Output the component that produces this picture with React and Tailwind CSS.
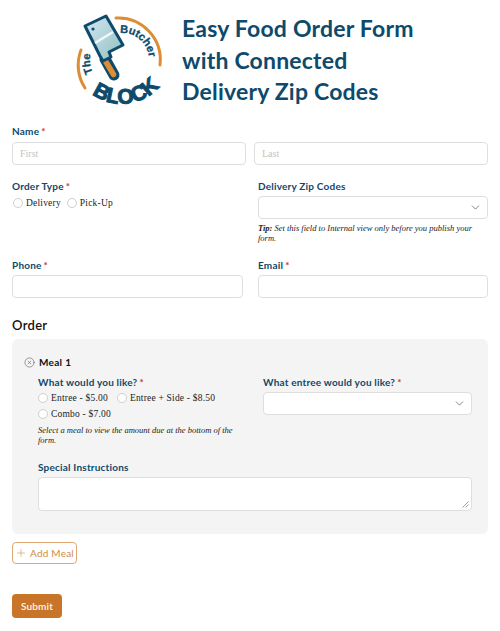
import React from 'react';
import { ChevronDown, Plus, CircleX } from 'lucide-react';

const labelFont = "font-['Lato',sans-serif]";
const bodyFont = "font-['Liberation_Serif',serif]";

function Logo() {
  return (
    <svg width="110" height="115" viewBox="0 0 110 115" className="shrink-0">
      <defs>
        <linearGradient id="blade" x1="0" y1="0" x2="1" y2="1">
          <stop offset="0" stopColor="#d5e6f2" />
          <stop offset="1" stopColor="#8fc0c0" />
        </linearGradient>
        <path id="butcherArc" d="M 60 33 A 27 27 0 0 1 89 62" fill="none" />
        <path id="theArc" d="M 33 73 A 30 30 0 0 1 33 47" fill="none" />
        <path id="blockArc" d="M 32 94 A 50 50 0 0 0 105 79" fill="none" />
      </defs>
      <path d="M 25 88 A 42 42 0 0 1 21 50" fill="none" stroke="#dd8d33" strokeWidth="3" strokeLinecap="round" />
      <path d="M 56 18 A 42 42 0 0 1 100 65" fill="none" stroke="#dd8d33" strokeWidth="3" strokeLinecap="round" />
      <path d="M 45 59 L 54 75" stroke="#0d4a6b" strokeWidth="11" strokeLinecap="round" />
      <path d="M 46 62 L 53.5 74.5" stroke="#dd8d33" strokeWidth="5.5" strokeLinecap="round" />
      <path d="M 25 26 L 46 16 L 63 45 L 49 52 L 51 57 L 43 61 L 40 56 Z" fill="url(#blade)" stroke="#0d4a6b" strokeWidth="3" strokeLinejoin="round" />
      <path d="M 35 43 L 53 32" stroke="#f1f7f8" strokeWidth="2.5" />
      <circle cx="33" cy="29" r="1.6" fill="#0d4a6b" />
      <text className="font-['Liberation_Sans',sans-serif]" fontWeight="700" fontSize="11" fill="#0d4a6b" stroke="#0d4a6b" strokeWidth="0.3">
        <textPath href="#butcherArc">Butcher</textPath>
      </text>
      <text className="font-['Liberation_Sans',sans-serif]" fontWeight="700" fontSize="11" fill="#0d4a6b" stroke="#0d4a6b" strokeWidth="0.3">
        <textPath href="#theArc">The</textPath>
      </text>
      <text className="font-['Liberation_Sans',sans-serif]" fontWeight="700" fontSize="21" fill="#0d4a6b" stroke="#0d4a6b" strokeWidth="1">
        <textPath href="#blockArc">BLOCK</textPath>
      </text>
    </svg>
  );
}

function Label({ children, required, className = '' }) {
  return (
    <div className={`${labelFont} text-[10px] leading-[14px] font-bold tracking-[0.2px] text-[#10486a] ${className}`}>
      {children}
      {required && <span className="text-[#d2322d] ml-0.5">*</span>}
    </div>
  );
}

function TextBox({ placeholder, className = '' }) {
  return (
    <div className={`h-[23px] bg-white border border-[#dedede] rounded-[4px] pl-[7px] flex items-center ${bodyFont} text-[10px] text-[#c4c4c4] ${className}`}>
      {placeholder}
    </div>
  );
}

function SelectBox() {
  return (
    <div className="h-[23px] bg-white border border-[#dedede] rounded-[4px] flex items-center justify-end pr-[5px]">
      <ChevronDown size={13} strokeWidth={1.1} className="text-[#333]" />
    </div>
  );
}

function Radio({ children }) {
  return (
    <div className={`flex items-center gap-[3px] ${bodyFont} text-[9.5px] leading-[14px] text-[#222] tracking-[0.2px]`}>
      <span className="w-[10px] h-[10px] rounded-full bg-white border border-[#cfcfcf]" />
      {children}
    </div>
  );
}

export default function App() {
  return (
    <div className="w-[500px] h-[631px] bg-white overflow-hidden">
      <div className="flex pl-[60px] h-[124px]">
        <Logo />
        <h1 className="ml-3 pt-[13px] font-['Lato',sans-serif] font-bold text-[23px] leading-[31.5px] tracking-[0.2px] text-[#0d4a6b]">
          Easy Food Order Form<br />with Connected<br />Delivery Zip Codes
        </h1>
      </div>

      <div className="px-3">
        <Label required>Name</Label>
        <div className="flex gap-2 mt-1">
          <TextBox placeholder="First" className="flex-1" />
          <TextBox placeholder="Last" className="flex-1" />
        </div>

        <div className="flex gap-[15px] mt-[14px]">
          <div className="w-[231px]">
            <Label required>Order Type</Label>
            <div className="flex gap-[6px] mt-[3px] pl-px">
              <Radio>Delivery</Radio>
              <Radio>Pick-Up</Radio>
            </div>
          </div>
          <div className="flex-1">
            <Label>Delivery Zip Codes</Label>
            <div className="mt-[3px]"><SelectBox /></div>
            <p className={`${bodyFont} italic text-[8.5px] leading-[10px] text-[#222] mt-[4px]`}>
              <b>Tip:</b> Set this field to Internal view only before you publish your form.
            </p>
          </div>
        </div>

        <div className="flex gap-[15px] mt-[15px]">
          <div className="w-[231px]">
            <Label required>Phone</Label>
            <TextBox className="mt-[3px]" />
          </div>
          <div className="flex-1">
            <Label required>Email</Label>
            <TextBox className="mt-[3px]" />
          </div>
        </div>

        <h2 className={`${labelFont} font-semibold text-[13px] leading-[18px] tracking-[0.3px] text-[#111] mt-[18px]`}>Order</h2>

        <div className="bg-[#f4f4f4] rounded-[6px] mt-[5px] h-[195px] pl-3 pr-4 pt-[16px]">
          <div className={`flex items-center gap-[4px] ${labelFont} font-bold text-[10px] leading-[14px] tracking-[0.3px] text-[#111]`}>
            <CircleX size={11} strokeWidth={1} className="text-[#333]" />
            Meal 1
          </div>
          <div className="pl-[14px]">
            <div className="flex gap-[30px] mt-[6px]">
              <div className="w-[195px]">
                <Label required>What would you like?</Label>
                <div className="flex flex-wrap gap-x-[9px] gap-y-[2px] mt-[2px]">
                  <Radio>Entree - $5.00</Radio>
                  <Radio>Entree + Side - $8.50</Radio>
                  <Radio>Combo - $7.00</Radio>
                </div>
                <p className={`${bodyFont} italic text-[8.5px] leading-[10px] text-[#222] mt-[4px]`}>
                  Select a meal to view the amount due at the bottom of the form.
                </p>
              </div>
              <div className="flex-1">
                <Label required>What entree would you like?</Label>
                <div className="mt-[3px]"><SelectBox /></div>
              </div>
            </div>
            <Label className="mt-[15px]">Special Instructions</Label>
            <div className="relative h-[34px] bg-white border border-[#dedede] rounded-[4px] mt-[3px]">
              <svg width="7" height="7" viewBox="0 0 7 7" className="absolute right-0.5 bottom-0.5">
                <path d="M0.5 6.5 L6.5 0.5 M3.5 6.5 L6.5 3.5" stroke="#888" strokeWidth="0.8" />
              </svg>
            </div>
          </div>
        </div>

        <button className={`mt-[8px] h-[22px] w-[65px] flex items-center justify-center gap-[3px] bg-white border border-[#e2a873] rounded-[4px] ${labelFont} text-[10px] tracking-[0.2px] text-[#d08a48]`}>
          <Plus size={12} strokeWidth={1.1} />
          Add Meal
        </button>

        <button className={`mt-[30px] h-[24px] w-[50px] bg-[#c8752a] rounded-[4px] ${labelFont} font-semibold text-[10px] tracking-[0.2px] text-[#fff5e8]`}>
          Submit
        </button>
      </div>
    </div>
  );
}
